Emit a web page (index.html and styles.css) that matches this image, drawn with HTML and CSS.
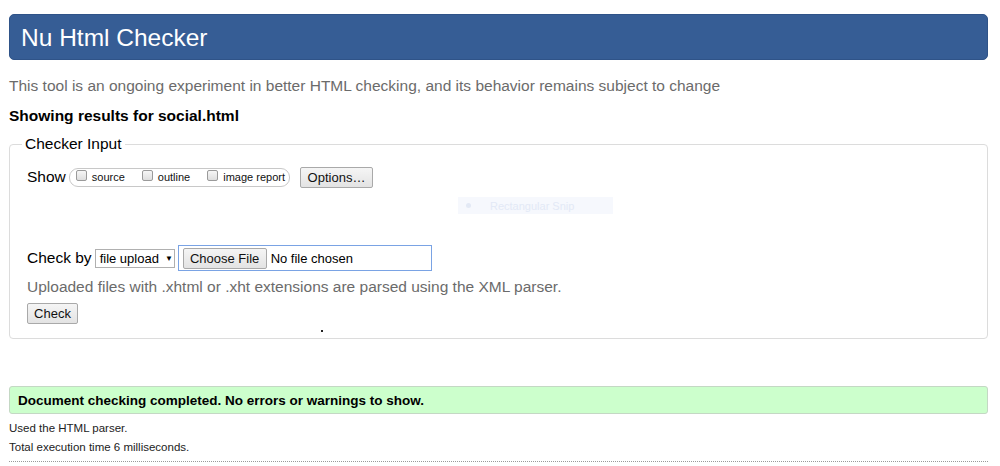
FILE: index.html
```html
<!DOCTYPE html>
<html lang="en">
<head>
<meta charset="utf-8">
<title>Nu Html Checker</title>
<link rel="stylesheet" href="styles.css">
</head>
<body>
<div class="page">
  <h1 class="banner">Nu Html Checker</h1>
  <p class="intro">This tool is an ongoing experiment in better HTML checking, and its behavior remains subject to change</p>
  <p class="showing">Showing results for social.html</p>

  <fieldset class="input-box">
    <legend>Checker Input</legend>
    <div class="row show-row">
      <span class="lbl">Show</span>
      <span class="pill">
        <span class="opt"><span class="cb"></span>source</span>
        <span class="opt"><span class="cb"></span>outline</span>
        <span class="opt"><span class="cb"></span>image report</span>
      </span>
      <span class="btn options">Options…</span>
    </div>
    <div class="row check-row">
      <span class="lbl">Check by</span>
      <span class="select">file upload <span class="arrow">▼</span></span>
      <span class="file">
        <span class="btn choose">Choose File</span>
        <span class="nofile">No file chosen</span>
      </span>
    </div>
    <p class="note">Uploaded files with .xhtml or .xht extensions are parsed using the XML parser.</p>
    <div class="row"><span class="btn check">Check</span></div>
    <div class="dotrow"><span class="dot"></span></div>
    <div class="snip"><span class="snip-ico"></span>Rectangular Snip</div>
  </fieldset>

  <p class="success">Document checking completed. No errors or warnings to show.</p>
  <p class="small first">Used the HTML parser.</p>
  <p class="small">Total execution time 6 milliseconds.</p>
  <hr class="dotted">
</div>
</body>
</html>
```
FILE: styles.css
```css
html, body {
  margin: 0;
  padding: 0;
  background: #fff;
}
body {
  font-family: "Liberation Sans", Arial, sans-serif;
  color: #000;
}
.page {
  padding: 14px 12px 0 9px;
}
.banner {
  margin: 0;
  height: 44px;
  background: #365d95;
  border: 1px solid #2f5388;
  border-radius: 5px;
  color: #fff;
  font-weight: normal;
  font-size: 24.5px;
  line-height: 46px;
  padding: 0 11px;
}
.intro {
  margin: 17px 0 0;
  font-size: 15.5px;
  line-height: 18px;
  color: #6b6b6b;
}
.showing {
  margin: 12px 0 0;
  font-size: 15.5px;
  line-height: 18px;
  font-weight: bold;
}
.input-box {
  position: relative;
  margin: 10px 0 0;
  border: 1px solid #dcdcdc;
  border-radius: 4px;
  padding: 13px 17px 0 17px;
  min-inline-size: 0;
}
.input-box legend {
  font-size: 15.5px;
  line-height: 18px;
  padding: 0 3px;
  margin-left: -5px;
}
.row {
  display: flex;
  align-items: center;
}
.lbl {
  font-size: 15.5px;
  line-height: 18px;
}
.show-row {
  height: 22px;
}
.pill {
  display: flex;
  align-items: center;
  height: 17px;
  margin-left: 3px;
  border: 1px solid #c8c8c8;
  border-radius: 9px;
  padding: 0 4px 0 6px;
  font-size: 11px;
}
.opt {
  display: flex;
  align-items: center;
  margin-right: 17px;
  color: #111;
}
.opt:last-child {
  margin-right: 0;
}
.cb {
  width: 9px;
  height: 9px;
  border: 1px solid #9a9a9a;
  border-radius: 2px;
  background: linear-gradient(#f6f6f6, #dedede);
  margin: -4px 5px 0 0;
}
.btn {
  display: inline-flex;
  align-items: center;
  justify-content: center;
  box-sizing: border-box;
  border: 1px solid #a9a9a9;
  border-radius: 2px;
  background: linear-gradient(#f5f5f5, #e3e3e3);
  font-size: 13px;
  color: #111;
}
.options {
  width: 73px;
  height: 21px;
  margin-left: 10px;
}
.check-row {
  margin-top: 57px;
  height: 26px;
}
.select {
  display: inline-flex;
  align-items: center;
  box-sizing: border-box;
  width: 80px;
  height: 19px;
  margin-left: 3px;
  border: 1px solid #b0b0b0;
  padding-left: 4px;
  font-size: 13px;
}
.arrow {
  font-size: 8px;
  margin-left: 6px;
}
.file {
  display: inline-flex;
  align-items: center;
  box-sizing: border-box;
  width: 254px;
  height: 26px;
  margin-left: 3px;
  border: 1px solid #7aa3e4;
  padding-left: 4px;
}
.choose {
  width: 84px;
  height: 21px;
}
.nofile {
  font-size: 13px;
  margin-left: 4px;
}
.note {
  margin: 7px 0 0;
  font-size: 15.5px;
  line-height: 18px;
  color: #6b6b6b;
}
.check {
  width: 51px;
  height: 21px;
  margin-top: 7px;
}
.dotrow {
  height: 8px;
}
.dot {
  display: block;
  width: 2px;
  height: 2px;
  background: #222;
  margin: 6px 0 0 294px;
}
.snip {
  position: absolute;
  left: 448px;
  top: 44px;
  width: 155px;
  height: 17px;
  background: #f6f8fd;
  display: flex;
  align-items: center;
  font-size: 11px;
  color: #e3e9f6;
}
.snip-ico {
  width: 5px;
  height: 5px;
  border-radius: 50%;
  background: #e3e9f5;
  margin: 0 19px 0 8px;
}
.success {
  margin: 47px 0 0;
  height: 26px;
  background: #ccffcc;
  border: 1px solid #c4d8c4;
  border-radius: 3px;
  padding: 0 8px;
  font-size: 13.5px;
  font-weight: bold;
  line-height: 27px;
}
.small {
  margin: 0;
  font-size: 11.5px;
  line-height: 19px;
  color: #222;
}
.small.first {
  margin-top: 5px;
}
.dotted {
  margin: 4px 0 0;
  border: 0;
  border-top: 1px dotted #999;
}
```
